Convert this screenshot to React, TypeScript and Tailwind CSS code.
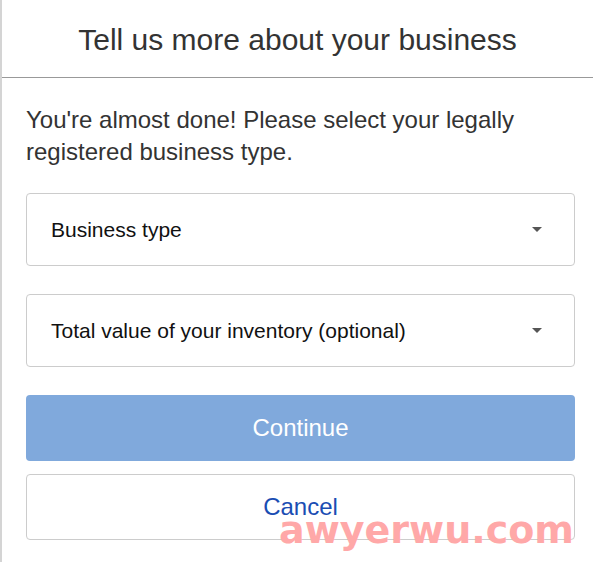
export default function App() {
  return (
    <div className="relative min-h-[562px] w-[593px] bg-white font-['Liberation_Sans',Arial,sans-serif] text-[#333]">
      <div className="min-h-[562px] border-l-2 border-[#d4d4d4]">
        <header className="flex h-[78px] items-center justify-center border-b border-[#999]">
          <h1 className="mt-[2px] text-[30px] font-normal text-[#333]">Tell us more about your business</h1>
        </header>

        <div className="pl-6 pr-[18px] pt-[26px]">
          <p className="text-[24px] leading-8 text-[#333]">
            You're almost done! Please select your legally registered business type.
          </p>

          <div className="mt-[25px] flex flex-col gap-[28px]">
            {["Business type", "Total value of your inventory (optional)"].map((label) => (
              <button
                key={label}
                className="flex h-[73px] items-center justify-between rounded border border-[#ccc] bg-white pl-6 pr-[32px] text-left text-[21px] text-[#111]"
              >
                <span>{label}</span>
                <span className="h-0 w-0 border-x-[5px] border-t-[5px] border-x-transparent border-t-[#555]" />
              </button>
            ))}
          </div>

          <button className="mt-[28px] flex h-[66px] w-full items-center justify-center rounded bg-[#80a9dc] text-[24px] text-white">
            Continue
          </button>
          <button className="mt-[13px] flex h-[66px] w-full items-center justify-center rounded border border-[#ccc] bg-white text-[24px] text-[#1a4db3]">
            Cancel
          </button>
        </div>
      </div>

      <div className="pointer-events-none absolute left-[279px] top-[511px] font-['DejaVu_Sans',sans-serif] text-[38px] font-bold leading-none text-[#ffa8a8]">
        awyerwu.com
      </div>
    </div>
  );
}
